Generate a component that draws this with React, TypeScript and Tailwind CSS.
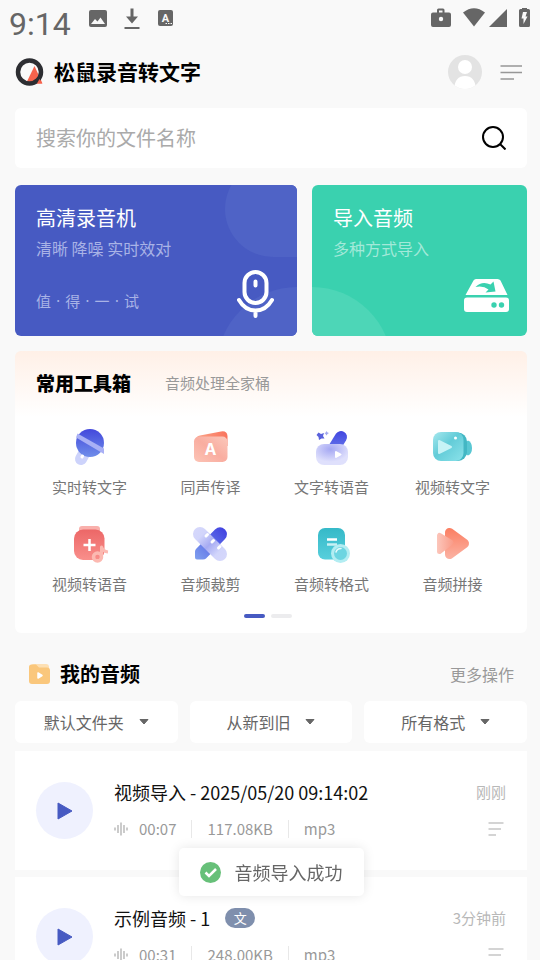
import type { ReactNode } from 'react'

type Tool = {
  name: string
  icon: ReactNode
}

type Recording = {
  title: string
  tag?: string
  duration: string
  size: string
  format: string
  time: string
}

const tools: Tool[] = [
  { name: '实时转文字', icon: <LiveIcon /> },
  { name: '同声传译', icon: <TranslateIcon /> },
  { name: '文字转语音', icon: <SpeechIcon /> },
  { name: '视频转文字', icon: <VideoTextIcon /> },
  { name: '视频转语音', icon: <VideoAudioIcon /> },
  { name: '音频裁剪', icon: <CutIcon /> },
  { name: '音频转格式', icon: <FormatIcon /> },
  { name: '音频拼接', icon: <JoinIcon /> },
]

const filters = [
  { label: '文件夹', options: ['默认文件夹'] },
  { label: '排序', options: ['从新到旧', '从旧到新'] },
  { label: '格式', options: ['所有格式'] },
]

const recordings: Recording[] = [
  {
    title: '视频导入 - 2025/05/20 09:14:02',
    duration: '00:07',
    size: '117.08KB',
    format: 'mp3',
    time: '刚刚',
  },
  {
    title: '示例音频 - 1',
    tag: '文',
    duration: '00:31',
    size: '248.00KB',
    format: 'mp3',
    time: '3分钟前',
  },
]

function LiveIcon() {
  return (
    <svg viewBox="0 0 45 44" className="h-11 w-[45px]" aria-hidden="true">
      <defs>
        <linearGradient id="live" x1="0" y1="0" x2="0" y2="1">
          <stop offset="0" stopColor="#4348dc" />
          <stop offset="1" stopColor="#6f8eea" />
        </linearGradient>
      </defs>
      <path d="M19 26L14 35" stroke="#cdd3fb" strokeWidth="12" strokeLinecap="round" />
      <circle cx="23" cy="19" r="14" fill="url(#live)" />
      <path d="M10.500 9.500L37 24.500V30L9 13.500Z" fill="#a9b0f5" />
      <path d="M15.500 32L15 33" stroke="#fff" strokeWidth="3" strokeLinecap="round" />
    </svg>
  )
}

function TranslateIcon() {
  return (
    <svg viewBox="0 0 45 44" className="h-11 w-[45px]" aria-hidden="true">
      <defs>
        <linearGradient id="trFront" x1="0" y1="1" x2="1" y2="0">
          <stop offset="0" stopColor="#fcc4b6" />
          <stop offset="0.5" stopColor="#f9ada0" />
          <stop offset="1" stopColor="#fbc8bb" />
        </linearGradient>
        <linearGradient id="trBack" x1="0" y1="0" x2="1" y2="0">
          <stop offset="0" stopColor="#fba488" />
          <stop offset="1" stopColor="#f9735c" />
        </linearGradient>
      </defs>
      <path d="M8 16Q8 12 12 11.500L33 7.500Q39 6.500 39.500 12V22H8Z" fill="url(#trBack)" />
      <rect x="6" y="12.500" width="33.500" height="25.500" rx="5" fill="url(#trFront)" />
      <text x="22.500" y="31" textAnchor="middle" fontFamily="Inter, sans-serif" fontSize="16" fontWeight="700" fill="#fff">
        A
      </text>
    </svg>
  )
}

function SpeechIcon() {
  return (
    <svg viewBox="0 0 45 44" className="h-11 w-[45px]" aria-hidden="true">
      <defs>
        <linearGradient id="spPill" x1="0" y1="7" x2="0" y2="32" gradientUnits="userSpaceOnUse">
          <stop offset="0" stopColor="#4146e0" />
          <stop offset="1" stopColor="#7286ee" />
        </linearGradient>
        <radialGradient id="spBox" cx="0.450" cy="0.250" r="0.600">
          <stop offset="0" stopColor="#a5a8f3" />
          <stop offset="1" stopColor="#dfe0fc" />
        </radialGradient>
      </defs>
      <path d="M32 13L24 26" stroke="url(#spPill)" strokeWidth="12" strokeLinecap="round" />
      <rect x="7" y="20" width="32" height="21" rx="8" fill="url(#spBox)" />
      <path d="M27 28V33L31.500 30.500Z" fill="#fff" stroke="#fff" strokeWidth="2" strokeLinejoin="round" />
      <path d="M9.500 8.500L12 10L15 9L14 12L15.500 14.500L12.500 14.500L10 16L9.500 13L7.500 11Z" fill="#5a62dc" />
      <path d="M17.500 7L18.500 8.500L20 9L18.500 10L17.500 11.500L16.500 10L15.500 9L16.800 8.500Z" fill="#a3a8ee" />
    </svg>
  )
}

function VideoTextIcon() {
  return (
    <svg viewBox="0 0 45 44" className="h-11 w-[45px]" aria-hidden="true">
      <defs>
        <linearGradient id="vtBox" x1="0" y1="0" x2="1" y2="1">
          <stop offset="0" stopColor="#a6e8ee" />
          <stop offset="0.450" stopColor="#63ccd8" />
          <stop offset="1" stopColor="#8be2ea" />
        </linearGradient>
      </defs>
      <path d="M33 20L38 16.500Q42 18 42 24T38 31.500L33 29Z" fill="#59c7d3" />
      <rect x="12" y="8.500" width="25" height="28.500" rx="9" fill="#43b7c4" />
      <rect x="3" y="8" width="30.500" height="29" rx="8" fill="url(#vtBox)" />
      <path d="M9 17V29L21 23Z" fill="#c7f3f6" stroke="#c7f3f6" strokeWidth="2" strokeLinejoin="round" />
      <circle cx="25.500" cy="14" r="1.500" fill="#fff" />
    </svg>
  )
}

function VideoAudioIcon() {
  return (
    <svg viewBox="0 0 45 44" className="h-11 w-[45px]" aria-hidden="true">
      <defs>
        <linearGradient id="vaBox" x1="0" y1="0" x2="0" y2="1">
          <stop offset="0" stopColor="#ec6767" />
          <stop offset="1" stopColor="#f98f8b" />
        </linearGradient>
      </defs>
      <rect x="12" y="5" width="21" height="10" rx="3" fill="#f9b0ac" />
      <rect x="7" y="8.500" width="30.500" height="30.500" rx="9" fill="url(#vaBox)" />
      <path d="M22.500 18V30M16.500 24H28.500" stroke="#fff" strokeWidth="2.500" />
      <circle cx="30.500" cy="36" r="4" fill="none" stroke="#fcb9b1" strokeWidth="3.500" />
      <path d="M34.500 36V26Q36 30.500 41 31" fill="none" stroke="#fcb9b1" strokeWidth="3" strokeLinejoin="round" />
    </svg>
  )
}

function CutIcon() {
  return (
    <svg viewBox="0 0 45 44" className="h-11 w-[45px]" aria-hidden="true">
      <defs>
        <linearGradient id="cutPen" x1="38" y1="7" x2="7" y2="38" gradientUnits="userSpaceOnUse">
          <stop offset="0" stopColor="#3f3fe0" />
          <stop offset="1" stopColor="#7fa0ee" />
        </linearGradient>
        <linearGradient id="cutTape" x1="5" y1="6" x2="39" y2="40" gradientUnits="userSpaceOnUse">
          <stop offset="0" stopColor="#d6d8fb" />
          <stop offset="0.250" stopColor="#d2d5fb" />
          <stop offset="0.500" stopColor="#a6abf3" />
          <stop offset="0.750" stopColor="#d2d5fb" />
          <stop offset="1" stopColor="#d6d8fb" />
        </linearGradient>
      </defs>
      <path
        d="M8 28L27 8.500Q32 4 37 8.500Q41 13 37 18L18 37.500Q17 38.500 15 38.500H9Q7 38.500 7 36.500V31Q7 29 8 28Z"
        fill="url(#cutPen)"
      />
      <path d="M12 13L32 33" stroke="url(#cutTape)" strokeWidth="14" strokeLinecap="round" />
      <path d="M18 15L19.500 13.500M24 21L25.500 19.500M30.500 27L32 25.500" stroke="#fff" strokeWidth="3" strokeLinecap="round" />
    </svg>
  )
}

function FormatIcon() {
  return (
    <svg viewBox="0 0 45 44" className="h-11 w-[45px]" aria-hidden="true">
      <defs>
        <linearGradient id="fmBox" x1="0" y1="0" x2="0" y2="1">
          <stop offset="0" stopColor="#35b9c8" />
          <stop offset="1" stopColor="#58cfdc" />
        </linearGradient>
      </defs>
      <rect x="9" y="7" width="27" height="31.500" rx="7" fill="url(#fmBox)" />
      <path d="M18 18.500H28" stroke="#fff" strokeWidth="2.500" />
      <path d="M18 23.500H28" stroke="#c9f1f4" strokeWidth="2.500" />
      <circle cx="31.500" cy="32.500" r="9.500" fill="#b3edf2" />
      <circle cx="31.500" cy="32.500" r="6.500" fill="#6dd5e1" />
      <path d="M27 31Q28 27.500 32 27.500" fill="none" stroke="#e4fafb" strokeWidth="1.500" strokeLinecap="round" />
    </svg>
  )
}

function JoinIcon() {
  return (
    <svg viewBox="0 0 45 44" className="h-11 w-[45px]" aria-hidden="true">
      <defs>
        <linearGradient id="joinBig" x1="0" y1="7" x2="0" y2="38" gradientUnits="userSpaceOnUse">
          <stop offset="0" stopColor="#fb7e61" />
          <stop offset="1" stopColor="#fbb3a4" />
        </linearGradient>
        <linearGradient id="joinSmall" x1="7" y1="0" x2="23" y2="0" gradientUnits="userSpaceOnUse">
          <stop offset="0" stopColor="#fcc6bb" />
          <stop offset="1" stopColor="#f99c89" />
        </linearGradient>
      </defs>
      <path d="M19.500 11.500V33.500L34.500 22.500Z" fill="url(#joinBig)" stroke="url(#joinBig)" strokeWidth="9" strokeLinejoin="round" />
      <path d="M9.500 14.500V30.500L21 21.500Z" fill="url(#joinSmall)" stroke="url(#joinSmall)" strokeWidth="5" strokeLinejoin="round" />
    </svg>
  )
}

function StatusBar() {
  return (
    <div className="flex shrink-0 items-start justify-between pt-2 pr-2 pl-[9px] text-[#666666]">
      <div className="flex gap-4">
        <span className="font-[Roboto] text-[32px] leading-8">9:14</span>
        <div className="flex gap-3">
          <svg viewBox="0 0 22 22" className="h-[22px] w-[22px]" aria-hidden="true">
            <rect x="2" y="2" width="18" height="17" rx="2" fill="currentColor" />
            <path d="M4 16L8 11L10.500 13.500L13.500 9.500L18 16Z" fill="#f9f9f9" />
          </svg>
          <svg viewBox="0 0 22 22" className="h-[22px] w-[22px]" aria-hidden="true">
            <path d="M9.500 0.500H12.500V8.500H17L11 15.500L5 8.500H9.500ZM3.500 19H18.500V21H3.500Z" fill="currentColor" />
          </svg>
          <svg viewBox="0 0 22 22" className="h-[22px] w-[22px]" aria-hidden="true">
            <rect x="3" y="2" width="15" height="16" rx="2" fill="currentColor" />
            <text x="10.500" y="14" textAnchor="middle" fontFamily="Roboto, sans-serif" fontSize="11" fontWeight="700" fill="#f9f9f9">
              A
            </text>
            <path d="M10.500 15.500H12M13 15.500H14.500M15.500 15.500H17" stroke="#f9f9f9" strokeWidth="1.200" />
          </svg>
        </div>
      </div>
      <div className="flex">
        <svg viewBox="0 0 32 22" className="h-[22px] w-8" aria-hidden="true">
          <path
            d="M2 4.500H7V2Q7 0.500 8.500 0.500H13Q14.500 0.500 14.500 2V4.500H19Q21 4.500 21 6.500V17Q21 19 19 19H3Q1 19 1 17V6.500Q1 4.500 3 4.500ZM9 2.500V4.500H12.500V2.500Z"
            fill="currentColor"
            fillRule="evenodd"
          />
          <circle cx="11" cy="11" r="2.200" fill="#f9f9f9" />
        </svg>
        <svg viewBox="0 0 26 22" className="h-[22px] w-[26px]" aria-hidden="true">
          <path d="M1 4.500Q12 -4 23 4.500L12 18.500Z" fill="currentColor" />
        </svg>
        <svg viewBox="0 0 30 22" className="h-[22px] w-[30px]" aria-hidden="true">
          <path d="M19 1V19H1Z" fill="currentColor" />
        </svg>
        <svg viewBox="0 0 14 22" className="h-[22px] w-[14px]" aria-hidden="true">
          <path d="M4 1V-0.500H9V1H10.500Q12 1 12 2.500V17.500Q12 19 10.500 19H2.500Q1 19 1 17.500V2.500Q1 1 2.500 1Z" fill="currentColor" />
          <path d="M5 4H9L7.500 8.500H9.500L5.500 16V10.500H3.500Z" fill="#f9f9f9" />
        </svg>
      </div>
    </div>
  )
}

function Header() {
  return (
    <header className="mt-[14px] flex h-9 shrink-0 items-center">
      <svg viewBox="0 0 30 30" className="h-[30px] w-[30px]" aria-hidden="true">
        <path d="M19.500 9L11 26.500H27.500Z" fill="#f7634c" />
        <circle cx="14.500" cy="15" r="11.500" fill="none" stroke="#2d2e32" strokeWidth="4.500" />
        <path d="M24.500 22L27 26.500H22Z" fill="#f7634c" />
      </svg>
      <h1 className="ml-[9px] text-[21px] font-bold text-black">松鼠录音转文字</h1>
      <button type="button" aria-label="个人中心" className="ml-auto">
        <svg viewBox="0 0 34 34" className="h-[34px] w-[34px] overflow-hidden rounded-full">
          <rect width="34" height="34" fill="#e3e3e3" />
          <circle cx="17" cy="12" r="7" fill="#fff" />
          <path d="M6 34Q7 21 17 21T28 34Z" fill="#fff" />
        </svg>
      </button>
      <button type="button" aria-label="菜单" className="mr-[5px] ml-[18px]">
        <svg viewBox="0 0 22 18" className="h-[18px] w-[22px]" fill="none" stroke="#979797">
          <path d="M0.500 3H22M0.500 9.500H22M0.500 16H14" strokeWidth="1.300" />
        </svg>
      </button>
    </header>
  )
}

function SearchBar() {
  return (
    <form className="mt-[18px] flex h-[60px] shrink-0 items-center rounded-md bg-white px-[21px]">
      <input
        type="search"
        aria-label="搜索"
        placeholder="搜索你的文件名称"
        className="min-w-0 flex-1 bg-transparent text-[20px] text-black outline-none placeholder:text-[#aaaaaa]"
      />
      <button type="button" aria-label="搜索">
        <svg viewBox="0 0 24 24" className="h-6 w-6" fill="none" stroke="#000" strokeWidth="2">
          <circle cx="11" cy="11" r="10" />
          <path d="M18 18L23.500 23.500" />
        </svg>
      </button>
    </form>
  )
}

function EntryCards() {
  return (
    <section className="mt-[17px] grid shrink-0 grid-cols-[282fr_215fr] gap-[15px]">
      <button type="button" className="relative overflow-hidden rounded-md bg-[#475ac2] px-[21px] pt-[19px] pb-[23px] text-left">
        <span className="absolute -top-6 -right-[72px] h-24 w-36 rounded-full bg-[#4f63c6]" />
        <span className="absolute top-[102px] -right-20 h-40 w-40 rounded-full bg-[#4f63c6]" />
        <span className="relative block text-[20px] leading-7 text-white">高清录音机</span>
        <span className="relative mt-1 block text-[16px] leading-6 text-[#a9b3e6]">清晰 降噪 实时效对</span>
        <span className="relative mt-[31px] block font-['DejaVu_Sans','Noto_Sans_CJK_SC',sans-serif] text-[15px] leading-[22px] text-[#a9b3e6]">
          值 · 得 · 一 · 试
        </span>
        <svg
          viewBox="0 0 37 48"
          className="absolute right-[23px] bottom-[18px] h-12 w-[37px]"
          fill="none"
          stroke="#fff"
          strokeWidth="4"
          strokeLinecap="round"
          aria-hidden="true"
        >
          <rect x="7.500" y="2" width="22" height="31" rx="11" />
          <path d="M18.500 11.500V15.500M2 30Q8 40.500 18.500 40.500T35 30M18.500 41V46" />
        </svg>
      </button>
      <button type="button" className="relative overflow-hidden rounded-md bg-[#3ad1af] px-[21px] pt-[19px] pb-[23px] text-left">
        <span className="absolute top-[102px] -left-20 h-40 w-40 rounded-full bg-[#4dd6b7]" />
        <span className="relative block text-[20px] leading-7 text-white">导入音频</span>
        <span className="relative mt-1 block text-[16px] leading-6 text-[#a3e9d9]">多种方式导入</span>
        <span className="mt-[31px] block h-[22px]" />
        <svg viewBox="0 0 45 33" className="absolute right-[18px] bottom-6 h-[33px] w-[45px]" aria-hidden="true">
          <path d="M12 0H33.500Q35.500 0 36.500 1.500L43.500 16H1.500L9.500 1.500Q10.300 0 12 0Z" fill="#fff" />
          <rect y="18.500" width="45" height="14.500" rx="3" fill="#fff" />
          <path d="M11.500 8Q18 1.500 26.500 5.500L29.500 2.500L31.500 12.500L21.500 13.500L24.500 10.500Q19.500 6.500 11.500 8Z" fill="#3ad1af" />
          <circle cx="30" cy="26" r="2.700" fill="#3ad1af" />
          <circle cx="37.500" cy="26" r="2.700" fill="#3ad1af" />
        </svg>
      </button>
    </section>
  )
}

function Toolbox() {
  return (
    <section className="mt-[15px] shrink-0 rounded-md bg-white bg-[linear-gradient(#fff0e7,#ffffff_66px)] pb-[15px]">
      <div className="flex h-16 items-center px-[21px]">
        <h2 className="text-[19px] font-black text-black">常用工具箱</h2>
        <p className="ml-[34px] text-[15px] text-[#999999]">音频处理全家桶</p>
      </div>
      <div className="mt-[9px] grid grid-cols-4 gap-y-[23px] px-[14px]">
        {tools.map((tool) => (
          <button key={tool.name} type="button" className="flex flex-col items-center gap-2">
            {tool.icon}
            <span className="text-[15px] leading-[22px] text-[#777777]">{tool.name}</span>
          </button>
        ))}
      </div>
      <div className="mt-[19px] flex justify-center">
        <span className="mr-[6px] h-1 w-[21px] rounded-full bg-[#475ac2]" />
        <span className="mr-[6px] h-1 w-[21px] rounded-full bg-[#ececee]" />
      </div>
    </section>
  )
}

function Filters() {
  return (
    <div className="grid shrink-0 grid-cols-3 gap-3">
      {filters.map((filter) => (
        <label key={filter.label} className="flex h-[42px] items-center justify-center gap-[14px] rounded-md bg-white">
          <select aria-label={filter.label} className="appearance-none bg-transparent text-[16px] text-[#666666] outline-none">
            {filter.options.map((option) => (
              <option key={option}>{option}</option>
            ))}
          </select>
          <svg viewBox="0 0 10 6" className="h-[6px] w-[10px]" aria-hidden="true">
            <path d="M1 0.500H9L5 5Z" fill="#666666" stroke="#666666" strokeLinejoin="round" />
          </svg>
        </label>
      ))}
    </div>
  )
}

function RecordingRow({ recording }: { recording: Recording }) {
  return (
    <li className="flex h-[119px] shrink-0 items-center gap-[21px] bg-white px-[21px]">
      <button
        type="button"
        aria-label="播放"
        className="flex h-[57px] w-[57px] shrink-0 items-center justify-center rounded-full bg-[#eff1fe]"
      >
        <svg viewBox="0 0 16 18" className="h-[18px] w-4" aria-hidden="true">
          <path d="M1 1V17L15 9Z" fill="#475ac2" stroke="#475ac2" strokeLinejoin="round" />
        </svg>
      </button>
      <div className="flex min-w-0 flex-1 flex-col gap-[13px] pb-[2px]">
        <div className="flex items-center">
          <h3 className="text-[18px] leading-[26px] text-[#111111]">{recording.title}</h3>
          {recording.tag && (
            <span className="ml-[15px] flex h-5 w-[30px] items-center justify-center rounded-full bg-[#7f8fad] text-[13px] text-white">
              {recording.tag}
            </span>
          )}
          <span className="ml-auto text-[15px] leading-[22px] text-[#b8b8b8]">{recording.time}</span>
        </div>
        <div className="flex items-center gap-[15px] text-[15px] leading-[22px] text-[#999999]">
          <span className="flex items-center gap-[11px]">
            <svg viewBox="0 0 14 14" className="h-[14px] w-[14px]" stroke="#b0b0b0" aria-hidden="true">
              <path d="M1 5.500V8.500M4 3V11M7 0.500V13.500M10 3V11M13 5.500V8.500" strokeWidth="1.300" />
            </svg>
            {recording.duration}
          </span>
          <span className="h-[18px] w-px bg-[#e8e8e8]" />
          <span>{recording.size}</span>
          <span className="h-[18px] w-px bg-[#e8e8e8]" />
          <span>{recording.format}</span>
          <button type="button" aria-label="更多" className="mr-[2px] ml-auto">
            <svg viewBox="0 0 16 14" className="h-[14px] w-4" fill="none" stroke="#aaaaaa">
              <path d="M0.500 1H15.500M0.500 7H13M0.500 13H8" strokeWidth="1.200" />
            </svg>
          </button>
        </div>
      </div>
    </li>
  )
}

function Toast({ message }: { message: string }) {
  return (
    <div className="pointer-events-none fixed inset-x-0 bottom-16 flex justify-center pr-[13px] pl-[15px]">
      <div
        role="status"
        className="flex h-12 items-center gap-[14px] rounded-[5px] bg-white px-[21px] text-[18px] text-[#666666] shadow-[0_0_12px_rgba(0,0,0,0.10)]"
      >
        <svg viewBox="0 0 21 21" className="h-[21px] w-[21px]" aria-hidden="true">
          <circle cx="10.500" cy="10.500" r="10.500" fill="#67c079" />
          <path d="M5.500 10.500L9 14L16 7" fill="none" stroke="#fff" strokeWidth="2.500" />
        </svg>
        {message}
      </div>
    </div>
  )
}

export default function App() {
  return (
    <div className="h-screen overflow-hidden bg-[#f9f9f9] font-['Noto_Sans_CJK_SC',sans-serif]">
      <StatusBar />
      <main className="flex flex-col pr-[13px] pl-[15px]">
        <Header />
        <SearchBar />
        <EntryCards />
        <Toolbox />
        <div className="flex shrink-0 items-center px-[13px] pt-[25px] pb-[11px]">
          <svg viewBox="0 0 22 22" className="h-[22px] w-[22px]" aria-hidden="true">
            <rect x="3" y="1" width="18" height="14" rx="3" fill="#fde0b4" />
            <path d="M1 4Q1 1.500 3.500 1.500H8L11 4.500H19Q22 4.500 22 7.500V18Q22 21 19 21H4Q1 21 1 18Z" fill="#fac77c" />
            <path d="M10 10V15L14 12.500Z" fill="#fff" stroke="#fff" strokeWidth="1.500" strokeLinejoin="round" />
          </svg>
          <h2 className="ml-[10px] text-[20px] leading-8 font-bold text-black">我的音频</h2>
          <button type="button" className="ml-auto text-[16px] text-[#999999]">
            更多操作
          </button>
        </div>
        <Filters />
        <ul className="mt-2 flex flex-col gap-[7px]">
          {recordings.map((recording) => (
            <RecordingRow key={recording.title} recording={recording} />
          ))}
        </ul>
      </main>
      <Toast message="音频导入成功" />
    </div>
  )
}
